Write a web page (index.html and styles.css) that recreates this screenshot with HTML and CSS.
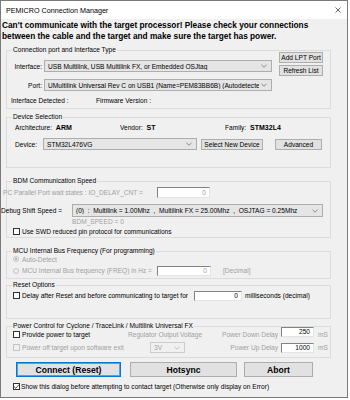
FILE: index.html
```html
<!DOCTYPE html>
<html lang="en">
<head>
    <meta charset="UTF-8">
    <title>PEMICRO Connection Manager</title>
    <link rel="stylesheet" href="styles.css">
</head>
<body>
<div class="window">
    <div class="titlebar">
        <span class="title">PEMICRO Connection Manager</span>
        <svg class="close" width="6" height="6" viewBox="0 0 6 6"><path d="M0.5 0.5 L5.5 5.5 M5.5 0.5 L0.5 5.5" stroke="#222" stroke-width="0.7"/></svg>
    </div>

    <p class="error">Can't communicate with the target processor! Please check your connections<br>between the cable and the target and make sure the target has power.</p>

    <fieldset class="group g-conn">
        <legend>Connection port and Interface Type</legend>
        <div class="conn-top">
            <div class="row iface">
                <span class="lbl w35">Interface:</span>
                <div class="select w228"><span class="val">USB Multilink, USB Multilink FX, or Embedded OSJtag</span><svg class="chev" width="6" height="4" viewBox="0 0 6 4"><polyline points="0.5,0.8 3,3.2 5.5,0.8" fill="none" stroke="#666" stroke-width="0.7"/></svg></div>
            </div>
            <div class="btn-col">
                <button class="btn">Add LPT Port</button>
                <button class="btn">Refresh List</button>
            </div>
        </div>
        <div class="row port">
            <span class="lbl w35">Port:</span>
            <div class="select w228"><span class="val">UMultilink Universal Rev C on USB1 (Name=PEM83BB6B) (Autodetectec</span><svg class="chev" width="6" height="4" viewBox="0 0 6 4"><polyline points="0.5,0.8 3,3.2 5.5,0.8" fill="none" stroke="#666" stroke-width="0.7"/></svg></div>
        </div>
        <div class="row detected">
            <span class="det-a">Interface Detected :</span>
            <span>Firmware Version :</span>
        </div>
    </fieldset>

    <fieldset class="group g-device">
        <legend>Device Selection</legend>
        <div class="row arch">
            <span class="pair p1">Architecture: <b>ARM</b></span>
            <span class="pair p2">Vendor: <b>ST</b></span>
            <span class="pair">Family: <b>STM32L4</b></span>
        </div>
        <div class="row device">
            <span class="dev-lbl">Device:</span>
            <div class="select w154"><span class="val">STM32L476VG</span><svg class="chev" width="6" height="4" viewBox="0 0 6 4"><polyline points="0.5,0.8 3,3.2 5.5,0.8" fill="none" stroke="#666" stroke-width="0.7"/></svg></div>
            <button class="btn b-select">Select New Device</button>
            <button class="btn b-adv">Advanced</button>
        </div>
    </fieldset>

    <fieldset class="group g-bdm">
        <legend>BDM Communication Speed</legend>
        <div class="row pc">
            <span class="muted pc-lbl">PC Parallel Port wait states : IO_DELAY_CNT =</span>
            <span class="edit e-pc muted">0</span>
        </div>
        <div class="row debug">
            <span class="debug-lbl">Debug Shift Speed =</span>
            <div class="select w251"><span class="val">(0)&nbsp; :&nbsp; Multilink = 1.00Mhz&nbsp; ,&nbsp; Multilink FX = 25.00Mhz&nbsp; ,&nbsp; OSJTAG = 0.25Mhz</span><svg class="chev" width="6" height="4" viewBox="0 0 6 4"><polyline points="0.5,0.8 3,3.2 5.5,0.8" fill="none" stroke="#666" stroke-width="0.7"/></svg></div>
        </div>
        <div class="bdm-speed muted">BDM_SPEED = 0</div>
        <div class="row swd">
            <span class="check"></span>
            <span>Use SWD reduced pin protocol for communications</span>
        </div>
    </fieldset>

    <fieldset class="group g-mcu">
        <legend>MCU Internal Bus Frequency (For programming)</legend>
        <div class="row auto">
            <span class="radio on"></span>
            <span class="muted">Auto-Detect</span>
        </div>
        <div class="row freq">
            <span class="radio"></span>
            <span class="muted freq-lbl">MCU Internal Bus frequency (FREQ) in Hz =</span>
            <span class="edit e-freq muted">0</span>
            <span class="muted decimal">[Decimal]</span>
        </div>
    </fieldset>

    <fieldset class="group g-reset">
        <legend>Reset Options</legend>
        <div class="row delay">
            <span class="check"></span>
            <span class="delay-lbl">Delay after Reset and before communicating to target for</span>
            <span class="edit e-delay">0</span>
            <span class="ms-text">milliseconds (decimal)</span>
        </div>
    </fieldset>

    <fieldset class="group g-power">
        <legend>Power Control for Cyclone / TraceLink / Multilink Universal FX</legend>
        <div class="row pw1">
            <span class="check"></span>
            <span class="pw-lbl">Provide power to target</span>
            <span class="muted reg-lbl">Regulator Output Voltage</span>
            <span class="muted delay-name">Power Down Delay</span>
            <span class="edit e-pw top">250</span>
            <span class="muted unit">mS</span>
        </div>
        <div class="row pw2">
            <span class="check off"></span>
            <span class="muted pw-off">Power off target upon software exit</span>
            <div class="select off w35"><span class="val">3V</span><svg class="chev" width="6" height="4" viewBox="0 0 6 4"><polyline points="0.5,0.8 3,3.2 5.5,0.8" fill="none" stroke="#aaa" stroke-width="0.7"/></svg></div>
            <span class="muted delay-name up">Power Up Delay</span>
            <span class="edit e-pw">1000</span>
            <span class="muted unit">mS</span>
        </div>
    </fieldset>

    <div class="actions">
        <button class="big default">Connect (Reset)</button>
        <button class="big b-hot">Hotsync</button>
        <button class="big b-abort">Abort</button>
    </div>

    <div class="row show">
        <span class="check">
            <svg width="7" height="7" viewBox="0 0 7 7"><polyline points="1,3.6 2.8,5.3 6,1.6" fill="none" stroke="#222" stroke-width="0.8"/></svg>
        </span>
        <span>Show this dialog before attempting to contact target (Otherwise only display on Error)</span>
    </div>
</div>
</body>
</html>
```

FILE: styles.css
```css
* {
    margin: 0;
    padding: 0;
    box-sizing: border-box;
}

body {
    background: #fff;
    color: #000;
    font-family: 'Liberation Sans', Arial, sans-serif;
    font-size: 6.6px;
}

.window {
    width: 348px;
    height: 398px;
    border: 1px solid #7a7a7a;
    background: #f0f0f0;
    overflow: hidden;
}

.titlebar {
    height: 18px;
    background: #fff;
    display: flex;
    align-items: center;
    justify-content: space-between;
    padding: 0 6px 0 5px;
}

.title {
    font-size: 7.2px;
}

.error {
    height: 27px;
    padding: 1px 0 0 1px;
    font-weight: bold;
    font-size: 8.3px;
    line-height: 11px;
    white-space: nowrap;
}

.muted {
    color: #a0a0a0;
}

/* group boxes */
.group {
    width: 325px;
    min-width: 0;
    margin-left: 5px;
    border: 1px solid #dcdcdc;
}

.group legend {
    margin-left: 5px;
    padding: 0 1px;
    line-height: 8px;
}

.g-conn { height: 63px; }
.g-device { margin-top: 4px; height: 55px; }
.g-bdm { margin-top: 9px; height: 61px; }
.g-mcu { margin-top: 9px; height: 32px; }
.g-reset { margin-top: 2px; height: 38px; }
.g-power { margin-top: 3px; height: 36px; }

.row {
    display: flex;
    align-items: center;
    white-space: nowrap;
}

.lbl {
    text-align: right;
    margin-right: 2px;
}

.w35 { width: 35px; }
.w154 { width: 154px; }
.w228 { width: 228px; }
.w251 { width: 251px; }

/* combo boxes */
.select {
    display: flex;
    align-items: center;
    height: 12px;
    padding: 0 4px 0 3px;
    border: 1px solid #adadad;
    background: #e5e5e5;
}

.select .val {
    flex: 1;
    overflow: hidden;
    white-space: nowrap;
}

.select.off {
    background: #f0f0f0;
    border-color: #cccccc;
    color: #a0a0a0;
}

.chev {
    flex-shrink: 0;
    margin-left: 2px;
}

/* buttons */
.btn {
    height: 11px;
    border: 1px solid #adadad;
    background: #e1e1e1;
    font-family: inherit;
    font-size: 6.6px;
    color: #000;
}

/* edit boxes */
.edit {
    display: block;
    height: 11px;
    padding-right: 3px;
    text-align: right;
    line-height: 9px;
    background: #fff;
    border: 1px solid;
    border-color: #828282 #e3e3e3 #e3e3e3 #828282;
}

/* check boxes and radios */
.check {
    width: 7px;
    height: 7px;
    margin-right: 2px;
    border: 1px solid #333;
    background: #fff;
    flex-shrink: 0;
}

.check svg {
    display: block;
    margin: -1px;
}

.check.off {
    border-color: #c4c4c4;
    background: #f0f0f0;
}

.radio {
    width: 6px;
    height: 6px;
    margin-right: 3px;
    border: 1px solid #c4c4c4;
    border-radius: 50%;
    flex-shrink: 0;
    display: flex;
    align-items: center;
    justify-content: center;
}

.radio.on::after {
    content: "";
    width: 2px;
    height: 2px;
    border-radius: 50%;
    background: #a0a0a0;
}

/* connection group */
.conn-top {
    display: flex;
    height: 24px;
}

.iface {
    height: 12px;
    margin-top: 6px;
}

.btn-col {
    display: flex;
    flex-direction: column;
    gap: 2px;
    margin: -2px 0 0 7px;
}

.btn-col .btn {
    width: 44px;
}

.port {
    height: 14px;
}

.detected {
    height: 16px;
    padding-left: 4px;
}

.det-a {
    width: 85px;
}

/* device group */
.arch {
    height: 13px;
    padding-left: 8px;
}

.pair.p1,
.pair.p2 {
    width: 105px;
}

.pair b {
    margin-left: 2px;
    font-size: 7px;
}

.device {
    height: 12px;
    margin-top: 4px;
    padding-left: 8px;
}

.dev-lbl {
    width: 28px;
}

.b-select {
    width: 62px;
    margin-left: 4px;
}

.b-adv {
    width: 47px;
    margin-left: 12px;
}

/* bdm group */
.pc {
    height: 14px;
    margin-left: -4px;
}

.pc-lbl {
    width: 154px;
}

.e-pc {
    width: 53px;
}

.debug {
    height: 13px;
    margin-top: 5px;
    margin-left: -6px;
}

.debug-lbl {
    width: 71px;
}

.debug .select {
    height: 13px;
}

.bdm-speed {
    height: 9px;
    line-height: 9px;
    padding-left: 65px;
}

.swd {
    height: 11px;
    padding-left: 6px;
}

/* mcu group */
.auto {
    height: 8px;
    padding-left: 6px;
}

.freq {
    height: 15px;
    padding-left: 6px;
}

.freq-lbl {
    width: 135px;
}

.e-freq {
    width: 54px;
    height: 10px;
    line-height: 8px;
}

.decimal {
    margin-left: 12px;
}

/* reset group */
.delay {
    height: 13px;
    padding-left: 6px;
}

.delay-lbl {
    width: 172px;
}

.e-delay {
    width: 48px;
    height: 10px;
    line-height: 8px;
}

.ms-text {
    margin-left: 3px;
}

/* power group */
.pw1 {
    height: 14px;
    margin-top: -3px;
    padding-left: 6px;
}

.pw-lbl {
    width: 106px;
}

.reg-lbl {
    width: 94px;
}

.delay-name {
    width: 59px;
    padding-right: 3px;
    text-align: right;
}

.delay-name.up {
    width: 96px;
}

.e-pw {
    width: 33px;
    height: 10px;
    line-height: 8px;
}

.e-pw.top {
    align-self: flex-start;
}

.unit {
    margin-left: 4px;
}

.pw2 {
    height: 13px;
    padding-left: 6px;
}

.pw-off {
    width: 128px;
}

.pw2 .select {
    height: 11px;
}

/* bottom buttons */
.actions {
    display: flex;
    margin-top: 4px;
    padding-left: 15px;
}

.big {
    height: 15px;
    border: 1px solid #adadad;
    background: #e1e1e1;
    font-family: inherit;
    font-weight: bold;
    font-size: 8.6px;
    color: #000;
}

.big.default {
    width: 105px;
    border-color: #0078d7;
    box-shadow: inset 0 0 0 1px #5aa0e0;
}

.b-hot {
    width: 107px;
    margin-left: 9px;
}

.b-abort {
    width: 69px;
    margin-left: 7px;
}

.show {
    height: 12px;
    margin-top: 3px;
    padding-left: 12px;
}

.show .check {
    margin-right: 1px;
}
```
